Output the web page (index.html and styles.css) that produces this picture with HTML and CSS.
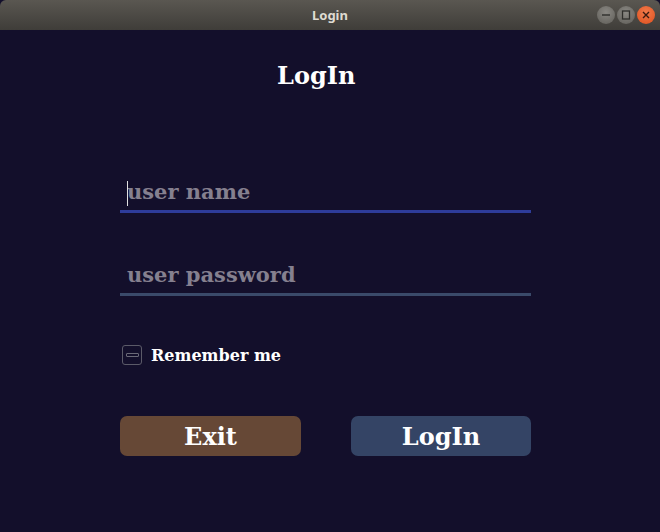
FILE: index.html
```html
<!DOCTYPE html>
<html>
<head>
<meta charset="utf-8">
<link rel="stylesheet" href="styles.css">
</head>
<body>
<div class="window">
  <div class="titlebar">
    <span class="title">Login</span>
    <div class="controls">
      <span class="ctl"><svg width="18" height="18" viewBox="0 0 18 18"><line x1="5" y1="9" x2="13" y2="9" stroke="#2f2e2b" stroke-width="1.4"/></svg></span>
      <span class="ctl"><svg width="18" height="18" viewBox="0 0 18 18"><rect x="5.5" y="5" width="7" height="8" fill="none" stroke="#2f2e2b" stroke-width="1.3"/></svg></span>
      <span class="ctl close"><svg width="18" height="18" viewBox="0 0 18 18"><path d="M6 6L12 12M12 6L6 12" stroke="#3a1a10" stroke-width="1.4"/></svg></span>
    </div>
  </div>
  <div class="content">
    <h1 class="heading">LogIn</h1>
    <div class="field focused">
      <span class="caret"></span><span class="placeholder">user name</span>
    </div>
    <div class="field">
      <span class="placeholder">user password</span>
    </div>
    <label class="remember">
      <span class="checkbox"><span class="dash"></span></span>
      <span class="remember-text">Remember me</span>
    </label>
    <div class="buttons">
      <button class="btn exit">Exit</button>
      <button class="btn login">LogIn</button>
    </div>
  </div>
</div>
</body>
</html>
```

FILE: styles.css
```css
html, body {
  margin: 0;
  padding: 0;
  background: #130f2b;
}
.window {
  width: 660px;
  height: 532px;
  display: flex;
  flex-direction: column;
  background: #130f2b;
}
.titlebar {
  height: 30px;
  flex: none;
  background: linear-gradient(#5a5751, #3f3d39);
  border-radius: 6px 6px 0 0;
  position: relative;
  display: flex;
  align-items: center;
  justify-content: center;
}
.title {
  font-family: "Noto Sans", "DejaVu Sans", sans-serif;
  font-weight: bold;
  font-size: 13px;
  color: #dfdbd2;
}
.controls {
  position: absolute;
  right: 5px;
  top: 6px;
  display: flex;
  gap: 2px;
}
.ctl {
  width: 18px;
  height: 18px;
  border-radius: 50%;
  background: radial-gradient(circle at 50% 35%, #8a8883, #5f5d58);
  display: flex;
}
.ctl.close {
  background: radial-gradient(circle at 50% 35%, #f27a4a, #dd4f1e);
}
.content {
  flex: 1;
  display: flex;
  flex-direction: column;
  padding: 0 129px 0 120px;
  font-family: "DejaVu Serif", serif;
  font-weight: bold;
}
.heading {
  margin: 31px 0 0 0;
  text-align: left;
  font-size: 24px;
  line-height: 30px;
  color: #ffffff;
  padding-left: 157px;
}
.field {
  width: 404px;
  height: 37px;
  border-bottom: 3px solid #3a4a6a;
  display: flex;
  align-items: center;
  padding-left: 7px;
  position: relative;
}
.field.focused {
  margin-top: 82px;
  border-bottom-color: #2e3c9a;
}
.field + .field {
  margin-top: 43px;
}
.placeholder {
  font-size: 21px;
  color: #85808f;
}
.caret {
  position: absolute;
  left: 7px;
  top: 8px;
  width: 1px;
  height: 25px;
  background: #e0e0e0;
}
.remember {
  margin-top: 49px;
  display: flex;
  align-items: center;
  gap: 9px;
  padding-left: 2px;
}
.checkbox {
  width: 18px;
  height: 18px;
  border: 1px solid #5b5a68;
  border-radius: 3px;
  display: flex;
  align-items: center;
  justify-content: center;
}
.dash {
  width: 11px;
  height: 2px;
  border: 1px solid #6a6977;
  border-radius: 1px;
}
.remember-text {
  font-size: 16px;
  color: #ffffff;
}
.buttons {
  margin-top: 51px;
  width: 411px;
  display: flex;
  justify-content: space-between;
}
.btn {
  width: 181px;
  height: 40px;
  border: none;
  border-radius: 7px;
  font-family: "DejaVu Serif", serif;
  font-weight: bold;
  font-size: 24px;
  color: #ffffff;
  padding: 0;
}
.btn.exit { background: #664836; }
.btn.login { background: #344465; width: 180px; }
```
